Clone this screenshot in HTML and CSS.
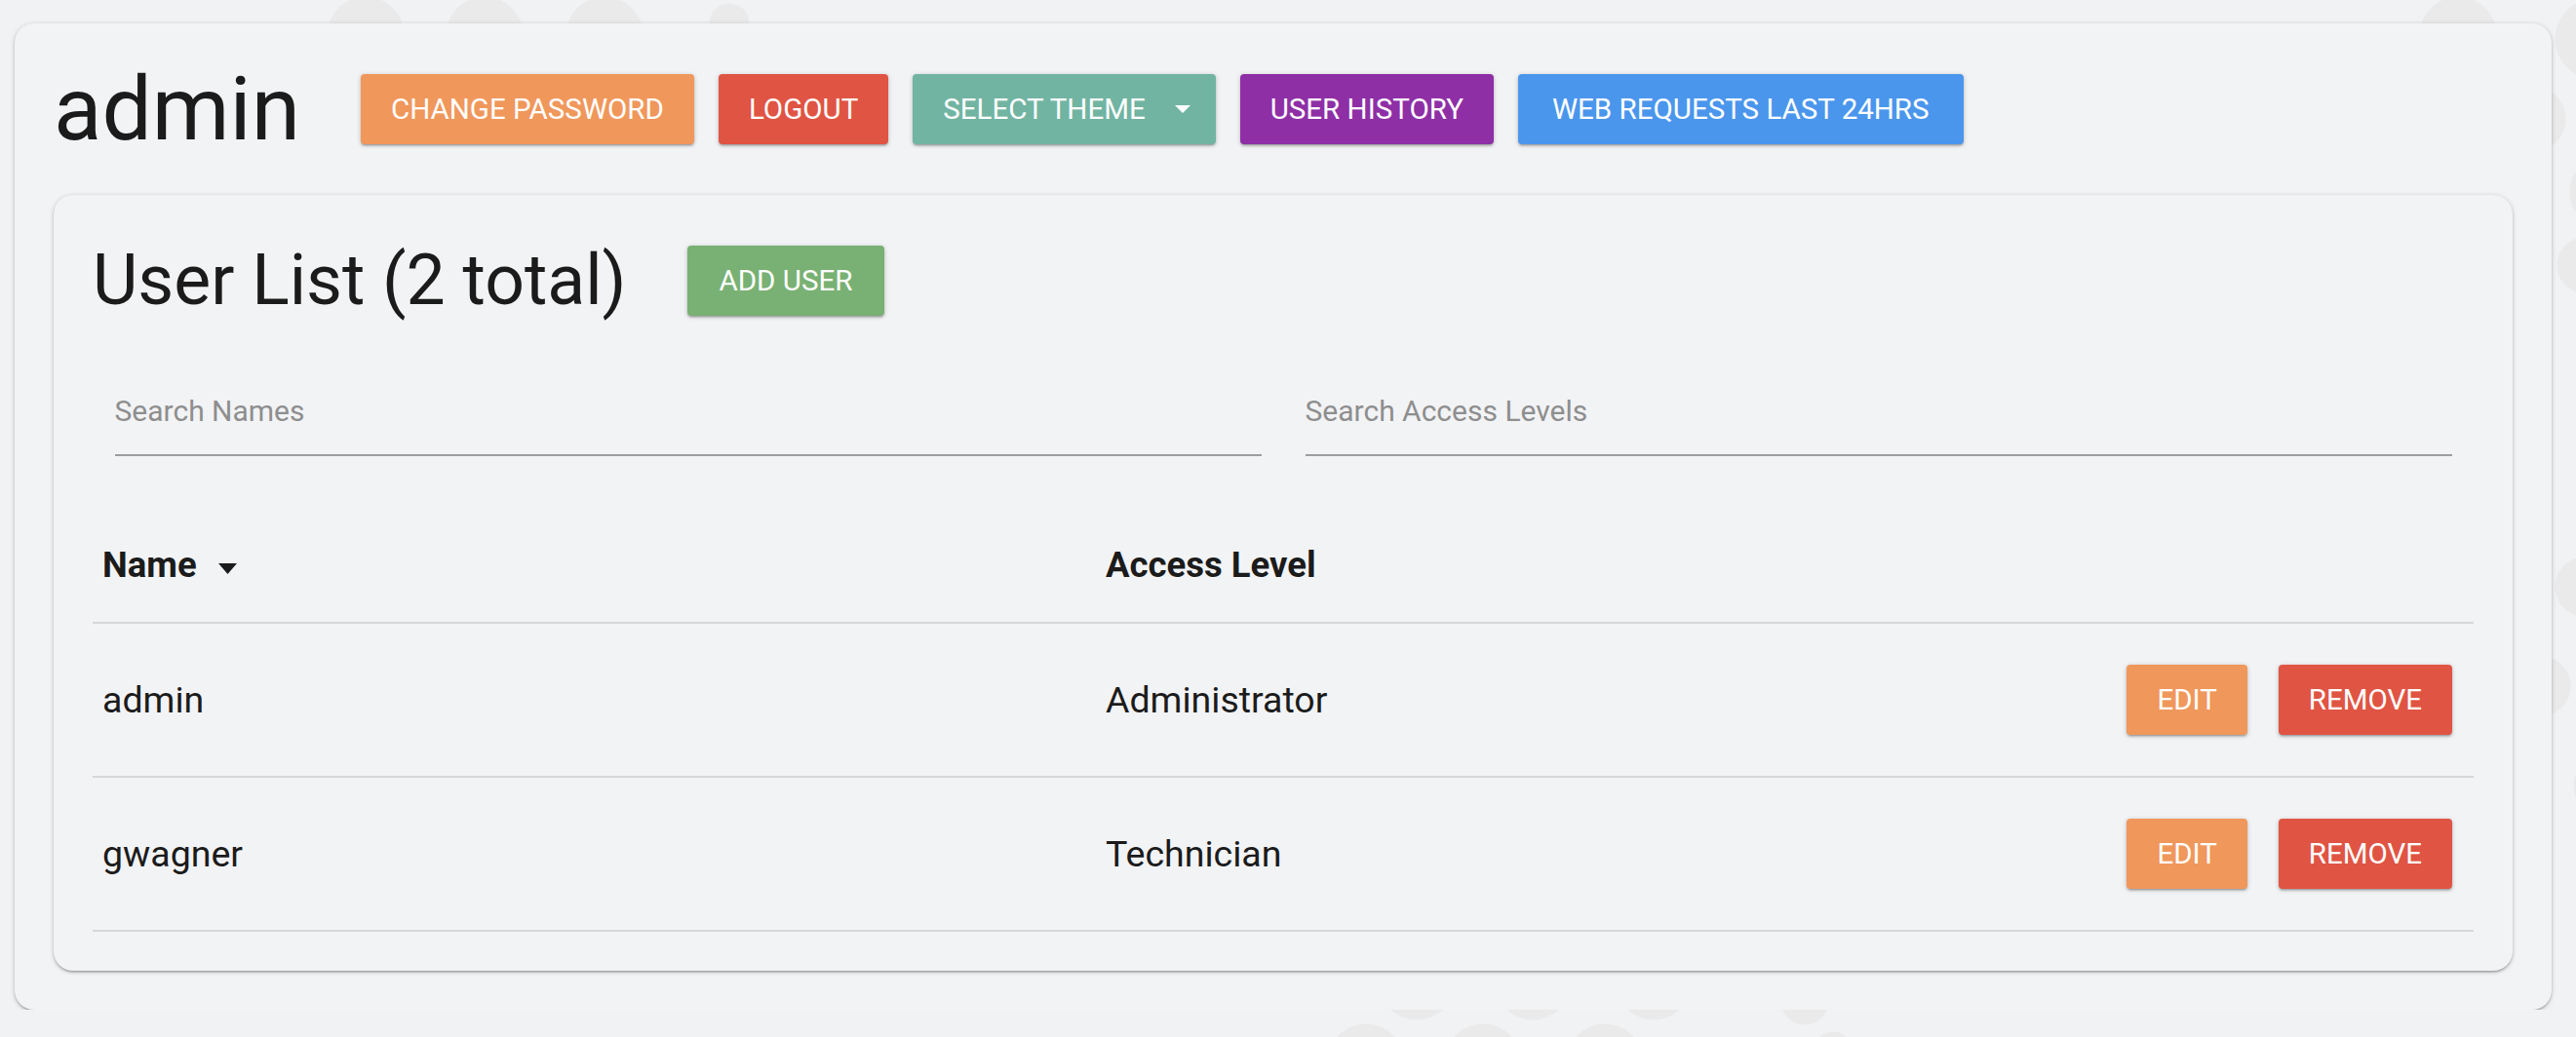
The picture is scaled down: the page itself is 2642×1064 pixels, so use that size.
FILE: index.html
```html
<!DOCTYPE html>
<html lang="en">
<head>
<meta charset="utf-8">
<title>admin</title>
<link rel="stylesheet" href="styles.css">
</head>
<body>
<div class="page">
  <section class="panel">
    <header class="panel-head">
      <h1 class="user-title">admin</h1>
      <div class="actions">
        <button class="btn btn-orange">Change Password</button>
        <button class="btn btn-red">Logout</button>
        <button class="btn btn-teal btn-drop">Select Theme
          <svg class="drop-caret" width="16" height="8" viewBox="0 0 16 8"><path d="M0 0H16L8 8Z" fill="#fff"/></svg>
        </button>
        <button class="btn btn-purple">User History</button>
        <button class="btn btn-blue btn-wide">Web Requests Last 24hrs</button>
      </div>
    </header>

    <section class="card">
      <div class="card-head">
        <h2 class="card-title">User List (2 total)</h2>
        <button class="btn btn-green btn-add">Add User</button>
      </div>

      <div class="filters">
        <div class="field"><input class="field-input" type="text" placeholder="Search Names"></div>
        <div class="field"><input class="field-input" type="text" placeholder="Search Access Levels"></div>
      </div>

      <div class="table">
        <div class="trow thead">
          <div class="cell">Name <svg class="sort-caret" width="19" height="11" viewBox="0 0 19 11"><path d="M0 0H19L9.5 11Z" fill="#1b1b1b"/></svg></div>
          <div class="cell">Access Level</div>
          <div class="cell"></div>
        </div>
        <div class="trow tbody">
          <div class="cell">admin</div>
          <div class="cell">Administrator</div>
          <div class="cell cell-actions">
            <button class="btn btn-orange">Edit</button>
            <button class="btn btn-red">Remove</button>
          </div>
        </div>
        <div class="trow tbody">
          <div class="cell">gwagner</div>
          <div class="cell">Technician</div>
          <div class="cell cell-actions">
            <button class="btn btn-orange">Edit</button>
            <button class="btn btn-red">Remove</button>
          </div>
        </div>
      </div>
    </section>
  </section>
</div>
</body>
</html>
```
FILE: styles.css
```css
html {
  min-height: 100%;
  background-color: #f1f2f4;
  background-repeat: no-repeat;
  background-image:
    radial-gradient(circle 40px at 375px 36px, #eaeaeb 97%, rgba(234,234,235,0) 100%),
    radial-gradient(circle 40px at 497px 36px, #eaeaeb 97%, rgba(234,234,235,0) 100%),
    radial-gradient(circle 40px at 620px 36px, #eaeaeb 97%, rgba(234,234,235,0) 100%),
    radial-gradient(circle 21px at 748px 24px, #eaeaeb 95%, rgba(234,234,235,0) 100%),
    radial-gradient(circle 40px at 2521px 36px, #eaeaeb 97%, rgba(234,234,235,0) 100%),
    radial-gradient(circle 42px at 2662px 40px, #eaeaeb 97%, rgba(234,234,235,0) 100%),
    radial-gradient(circle 34px at 2598px 122px, #eaeaeb 97%, rgba(234,234,235,0) 100%),
    radial-gradient(circle 38px at 2673px 197px, #eaeaeb 97%, rgba(234,234,235,0) 100%),
    radial-gradient(circle 29px at 2651px 272px, #eaeaeb 97%, rgba(234,234,235,0) 100%),
    radial-gradient(circle 31px at 2651px 602px, #eaeaeb 97%, rgba(234,234,235,0) 100%),
    radial-gradient(circle 31px at 2606px 704px, #eaeaeb 97%, rgba(234,234,235,0) 100%),
    radial-gradient(circle 31px at 2670px 806px, #eaeaeb 97%, rgba(234,234,235,0) 100%),
    radial-gradient(circle 40px at 1453px 1007px, #eaeaeb 97%, rgba(234,234,235,0) 100%),
    radial-gradient(circle 40px at 1572px 1007px, #eaeaeb 97%, rgba(234,234,235,0) 100%),
    radial-gradient(circle 40px at 1696px 1007px, #eaeaeb 97%, rgba(234,234,235,0) 100%),
    radial-gradient(circle 25px at 1851px 1027px, #eaeaeb 96%, rgba(234,234,235,0) 100%),
    radial-gradient(circle 40px at 1401px 1090px, #eaeaeb 97%, rgba(234,234,235,0) 100%),
    radial-gradient(circle 40px at 1521px 1090px, #eaeaeb 97%, rgba(234,234,235,0) 100%),
    radial-gradient(circle 40px at 1646px 1090px, #eaeaeb 97%, rgba(234,234,235,0) 100%),
    radial-gradient(circle 20px at 1880px 1078px, #eaeaeb 95%, rgba(234,234,235,0) 100%);
}

body {
  margin: 0;
  font-family: Roboto, "Noto Sans", "Liberation Sans", sans-serif;
  color: #1b1b1b;
}

.page {
  padding: 24px 25px 0 15px;
}

.panel {
  background: #f2f3f5;
  border-radius: 20px;
  padding: 40px;
  box-shadow: 0 2px 2px 0 rgba(0,0,0,.14), 0 3px 1px -2px rgba(0,0,0,.12), 0 1px 5px 0 rgba(0,0,0,.2);
}

.panel-head {
  display: flex;
  align-items: center;
  height: 96px;
}

.user-title {
  margin: 0 62px 0 0;
  font-size: 91px;
  line-height: 96px;
  font-weight: 400;
}

.actions {
  display: flex;
  align-items: center;
  gap: 25px;
}

.btn {
  display: inline-flex;
  align-items: center;
  height: 72px;
  padding: 0 31px;
  border: none;
  border-radius: 4px;
  font-family: Roboto, "Noto Sans", "Liberation Sans", sans-serif;
  font-size: 29.5px;
  font-weight: 400;
  text-transform: uppercase;
  color: #fff;
  white-space: nowrap;
  box-shadow: 0 2px 2px 0 rgba(0,0,0,.14), 0 3px 1px -2px rgba(0,0,0,.12), 0 1px 5px 0 rgba(0,0,0,.2);
}

.btn-orange { background: #f0975b; }
.btn-red { background: #e05443; }
.btn-teal { background: #71b4a2; }
.btn-purple { background: #8e2fa6; }
.btn-blue { background: #4a96ec; }
.btn-green { background: #78b173; }

.btn-drop {
  padding: 0 26px 0 31px;
}

.btn-wide {
  padding: 0 35px;
}

.btn-add {
  padding: 0 33px;
}

.drop-caret {
  margin-left: 30px;
}

.card {
  margin-top: 40px;
  background: #f2f3f5;
  border-radius: 20px;
  padding: 40px;
  box-shadow: 0 2px 2px 0 rgba(0,0,0,.14), 0 3px 1px -2px rgba(0,0,0,.12), 0 1px 5px 0 rgba(0,0,0,.2);
}

.card-head {
  display: flex;
  align-items: center;
  height: 96px;
}

.card-title {
  margin: 0 62px 0 0;
  font-size: 71.5px;
  line-height: 96px;
  font-weight: 400;
}

.filters {
  display: grid;
  grid-template-columns: 1fr 1fr;
  margin-top: 42px;
}

.field {
  padding: 0 22.5px;
}

.field-input {
  display: block;
  width: 100%;
  height: 90px;
  box-sizing: border-box;
  padding: 0 0 2px;
  border: none;
  border-bottom: 2px solid #9e9e9e;
  background: transparent;
  font-family: Roboto, "Noto Sans", "Liberation Sans", sans-serif;
  font-size: 30px;
  color: #1b1b1b;
  outline: none;
}

.field-input::placeholder {
  color: #8e8e8e;
}

.table {
  margin-top: 54px;
}

.trow {
  display: grid;
  grid-template-columns: 1029px 1fr auto;
  align-items: center;
  border-bottom: 2px solid #d6d7d9;
}

.thead .cell {
  padding: 36px 10px;
  font-size: 36.5px;
  line-height: 44px;
  font-weight: 700;
}

.tbody {
  height: 158px;
  box-sizing: border-box;
}

.tbody .cell {
  padding: 0 10px;
  font-size: 37.5px;
}

.sort-caret {
  margin-left: 13px;
  vertical-align: 3px;
}

.cell-actions {
  display: flex;
  gap: 32px;
  padding-right: 22px !important;
}
```
